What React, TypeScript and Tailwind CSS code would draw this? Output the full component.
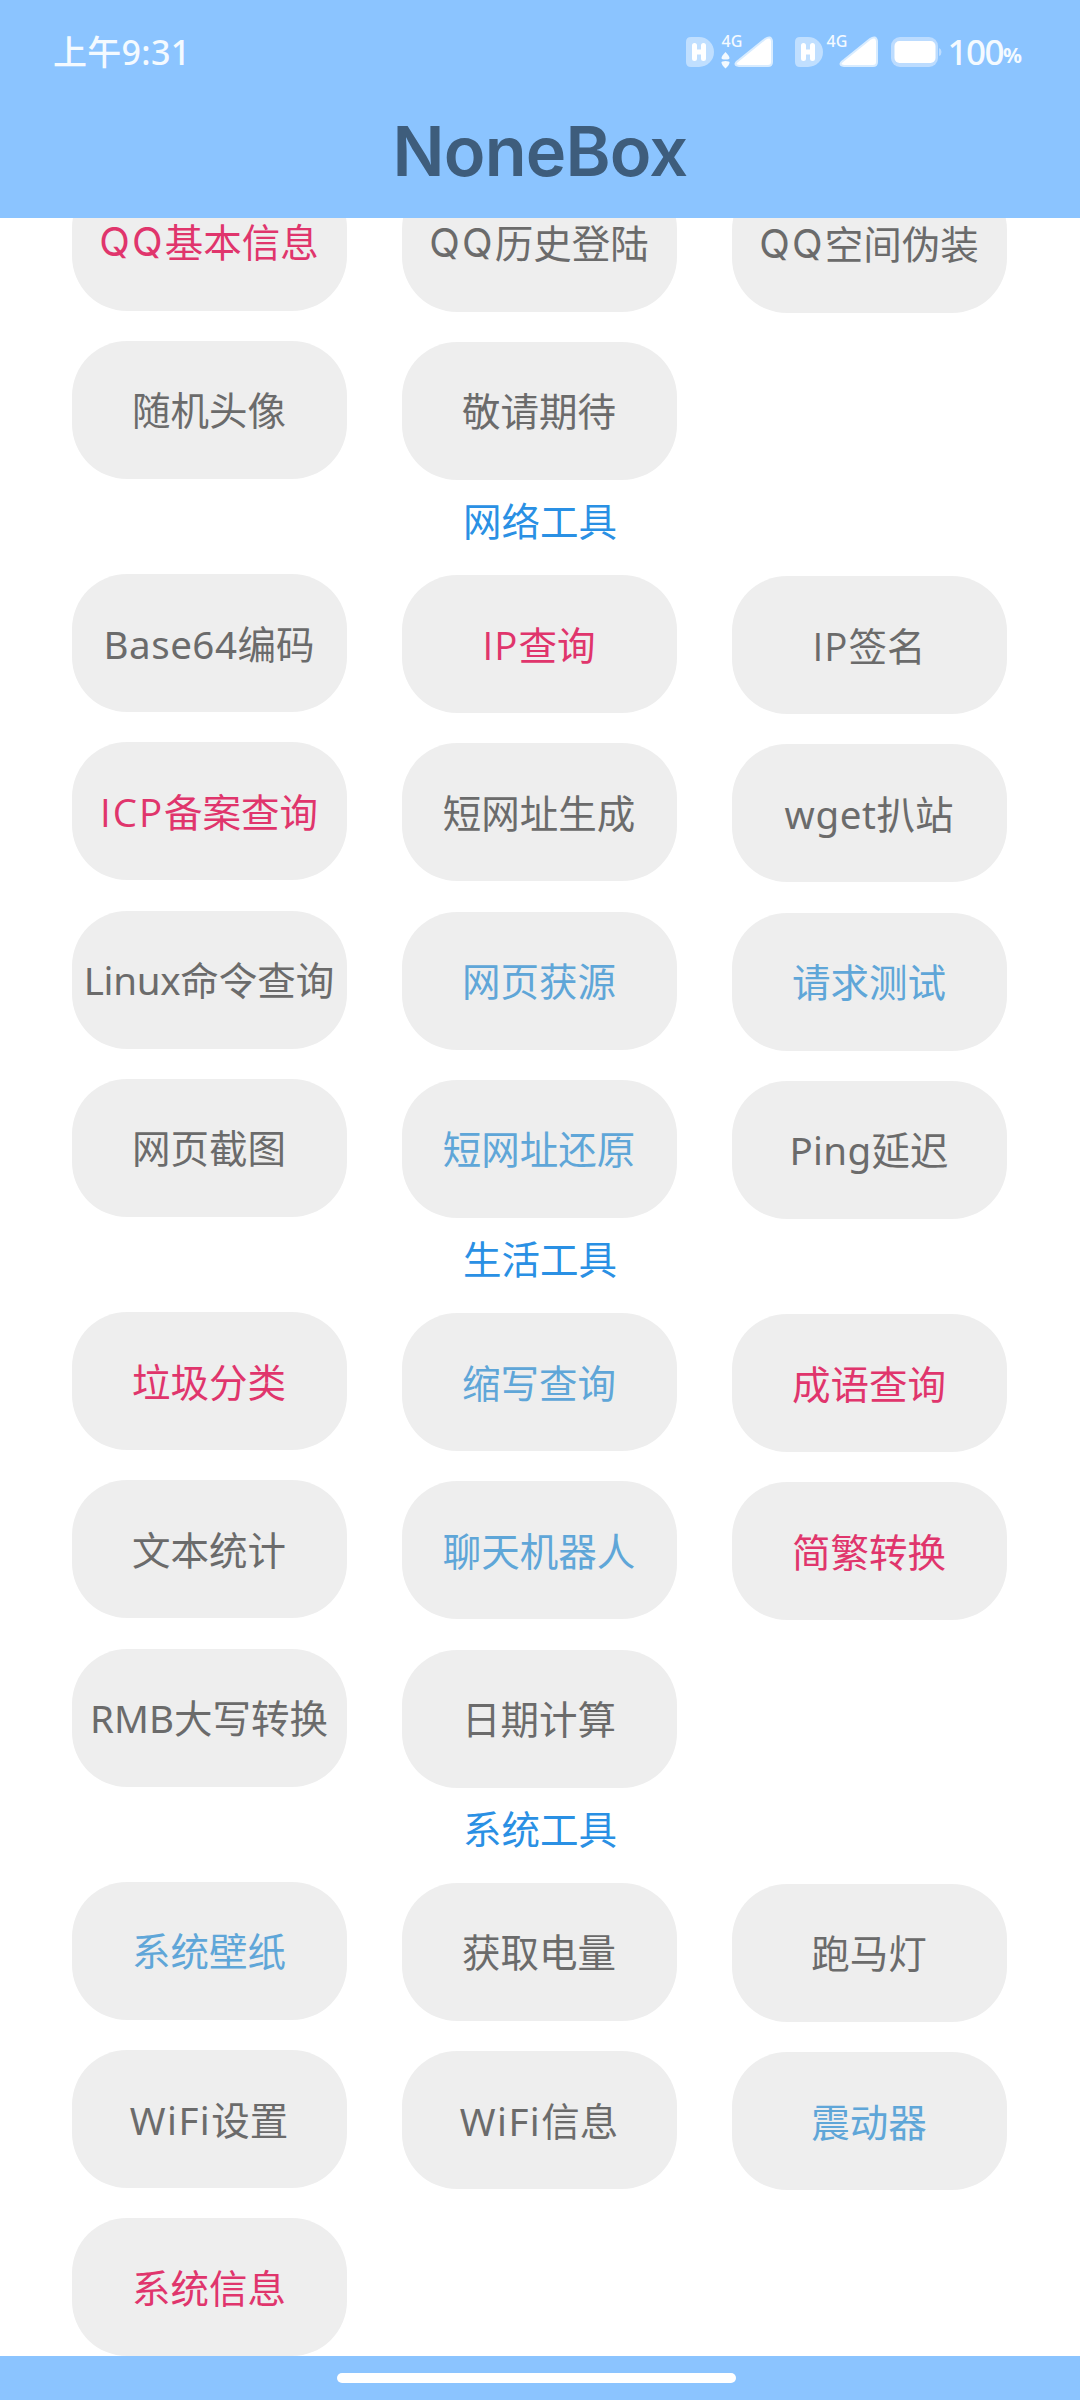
import clsx from "clsx";

type Tone = "gray" | "pink" | "blue";

interface Tool {
    name: string;
    tone?: Tone;
    latin?: string;
    latinClass?: string;
}

interface Section {
    title?: string;
    tools: Tool[];
}

const toneClass: Record<Tone, string> = {
    gray: "text-[#6b6b6b]",
    pink: "text-[#e0356c]",
    blue: "text-[#5fa6d8]",
};

// each column sits a pixel lower than the one before it
const columnOffset = ["pt-0", "pt-px", "pt-[2px]"];

const wideQ = "font-['Inter'] text-[40px] tracking-[2.2px]";
const plainCaps = "font-['Open_Sans'] tracking-[1px]";

const sections: Section[] = [
    {
        tools: [
            { latin: "QQ", latinClass: wideQ, name: "基本信息", tone: "pink" },
            { latin: "QQ", latinClass: wideQ, name: "历史登陆" },
            { latin: "QQ", latinClass: wideQ, name: "空间伪装" },
            { name: "随机头像" },
            { name: "敬请期待" },
        ],
    },
    {
        title: "网络工具",
        tools: [
            { latin: "Base64", latinClass: "tracking-[0.5px]", name: "编码" },
            { latin: "IP", latinClass: plainCaps, name: "查询", tone: "pink" },
            { latin: "IP", latinClass: plainCaps, name: "签名" },
            { latin: "ICP", latinClass: "font-['Open_Sans'] tracking-[2px]", name: "备案查询", tone: "pink" },
            { name: "短网址生成" },
            { latin: "wget", latinClass: "tracking-[0.6px]", name: "扒站" },
            { latin: "Linux", latinClass: "tracking-[-0.3px]", name: "命令查询" },
            { name: "网页获源", tone: "blue" },
            { name: "请求测试", tone: "blue" },
            { name: "网页截图" },
            { name: "短网址还原", tone: "blue" },
            { latin: "Ping", latinClass: "tracking-[0.3px]", name: "延迟" },
        ],
    },
    {
        title: "生活工具",
        tools: [
            { name: "垃圾分类", tone: "pink" },
            { name: "缩写查询", tone: "blue" },
            { name: "成语查询", tone: "pink" },
            { name: "文本统计" },
            { name: "聊天机器人", tone: "blue" },
            { name: "简繁转换", tone: "pink" },
            { latin: "RMB", name: "大写转换" },
            { name: "日期计算" },
        ],
    },
    {
        title: "系统工具",
        tools: [
            { name: "系统壁纸", tone: "blue" },
            { name: "获取电量" },
            { name: "跑马灯" },
            { latin: "WiFi", latinClass: "tracking-[1.4px]", name: "设置" },
            { latin: "WiFi", latinClass: "tracking-[1.4px]", name: "信息" },
            { name: "震动器", tone: "blue" },
            { name: "系统信息", tone: "pink" },
        ],
    },
];

const ToolButton = ({ tool }: { tool: Tool }) => (
    <button
        className={clsx(
            "flex h-[138px] w-[275px] items-center justify-center whitespace-nowrap rounded-[55px] bg-[#eeeeee] pt-[1px] pr-[1px] text-[38.5px] leading-[44px]",
            toneClass[tool.tone ?? "gray"]
        )}
    >
        {tool.latin && <span className={clsx("leading-[44px]", tool.latinClass)}>{tool.latin}</span>}
        <span>{tool.name}</span>
    </button>
);

const HdIcon = () => (
    <svg width="28" height="30" viewBox="0 0 28 30">
        <path d="M5 0H13A15 15 0 0 1 13 30H5Q0 30 0 25V5Q0 0 5 0Z" fill="#c0dfff" />
        <path d="M8.5 8.5V21.5M17.5 8.5V21.5M8.5 15H17.5" fill="none" stroke="#fff" strokeWidth="5" strokeLinecap="round" />
    </svg>
);

const SignalIcon = ({ active }: { active?: boolean }) => (
    <svg width="53" height="38" viewBox="0 -2 53 38" className="overflow-visible">
        {active && (
            <g fill="#f4faff">
                <path d="M0.5 24Q0.5 22 4.5 18Q8.5 22 8.5 24Q8.5 25.5 4.5 25.5Q0.5 25.5 0.5 24Z" />
                <path d="M0.5 28.5Q0.5 27 4.5 27Q8.5 27 8.5 28.5Q8.5 31 4.5 34.5Q0.5 31 0.5 28.5Z" />
            </g>
        )}
        <path d="M18 26L44 5Q50 1 51 7V28Q51 32 47 32H18Q11 31 18 26Z" fill="#fff" stroke="#d8ecff" strokeWidth="2" />
    </svg>
);

const Signal = ({ active }: { active?: boolean }) => (
    <div className="relative mt-[32px] flex">
        <SignalIcon active={active} />
        <span className="absolute left-0 top-[-1px] text-[16px] font-medium leading-[20px] tracking-[0.2px]">4G</span>
    </div>
);

const BatteryIcon = () => (
    <svg width="51" height="30" viewBox="0 0 51 30">
        <rect width="47" height="30" rx="9" fill="#bcdcff" />
        <path d="M48 11Q50.5 12 50.5 15Q50.5 18 48 19Z" fill="#bcdcff" />
        <rect x="3.5" y="4" width="41" height="22" rx="5" fill="#fff" />
    </svg>
);

const StatusBar = () => (
    <div className="flex h-[102px] items-start justify-between pl-[53px] pr-[58px] text-[#f4faff]">
        <span className="mt-[31px] text-[34px] font-medium leading-[42px] tracking-[0.3px]">上午9:31</span>
        <div className="flex items-start">
            <div className="mt-[37px] flex"><HdIcon /></div>
            <div className="ml-[7px] flex"><Signal active /></div>
            <div className="ml-[21px] mt-[37px] flex"><HdIcon /></div>
            <div className="ml-[3px] flex"><Signal /></div>
            <div className="ml-[12px] mt-[37px] flex"><BatteryIcon /></div>
            <span className="ml-[5px] mt-[31px] text-[35px] font-medium leading-[42px] tracking-[-1.5px]">100</span>
            <span className="mt-[43px] text-[21px] font-bold leading-[24px]">%</span>
        </div>
    </div>
);

export default function App() {
    return (
        <div className="flex h-[2400px] w-[1080px] flex-col bg-white font-['Noto_Sans','Noto_Sans_CJK_SC',sans-serif]">
            <header className="h-[218px] shrink-0 bg-[#8bc4ff]">
                <StatusBar />
                <h1 className="pt-[2px] text-center font-['Inter','Noto_Sans',sans-serif] text-[68.5px] font-semibold leading-[96px] tracking-[-0.8px] text-[#3e5d7c]">NoneBox</h1>
            </header>
            <main className="flex min-h-0 flex-1 flex-col overflow-hidden">
                {/* the list is scrolled, so its first row is cut by the header */}
                <div className="-mt-[45.4px] flex flex-col">
                    {sections.map((section, i) => (
                        <section key={i}>
                            {section.title && (
                                <h2 className="flex h-[95.25px] items-center justify-center pb-[11px] text-[38.5px] leading-[44px] text-[#2a90e4]">
                                    {section.title}
                                </h2>
                            )}
                            <div className="grid auto-rows-[138px] grid-cols-[275px_275px_275px] gap-x-[55px] gap-y-[30.25px] pl-[72px]">
                                {section.tools.map((tool, j) => (
                                    <div key={j} className={columnOffset[j % 3]}>
                                        <ToolButton tool={tool} />
                                    </div>
                                ))}
                            </div>
                        </section>
                    ))}
                </div>
            </main>
            <footer className="flex h-[44px] shrink-0 bg-[#8bc4ff] pl-[337px] pt-[17px]">
                <div className="h-[10px] w-[399px] rounded-full bg-white" />
            </footer>
        </div>
    );
}
